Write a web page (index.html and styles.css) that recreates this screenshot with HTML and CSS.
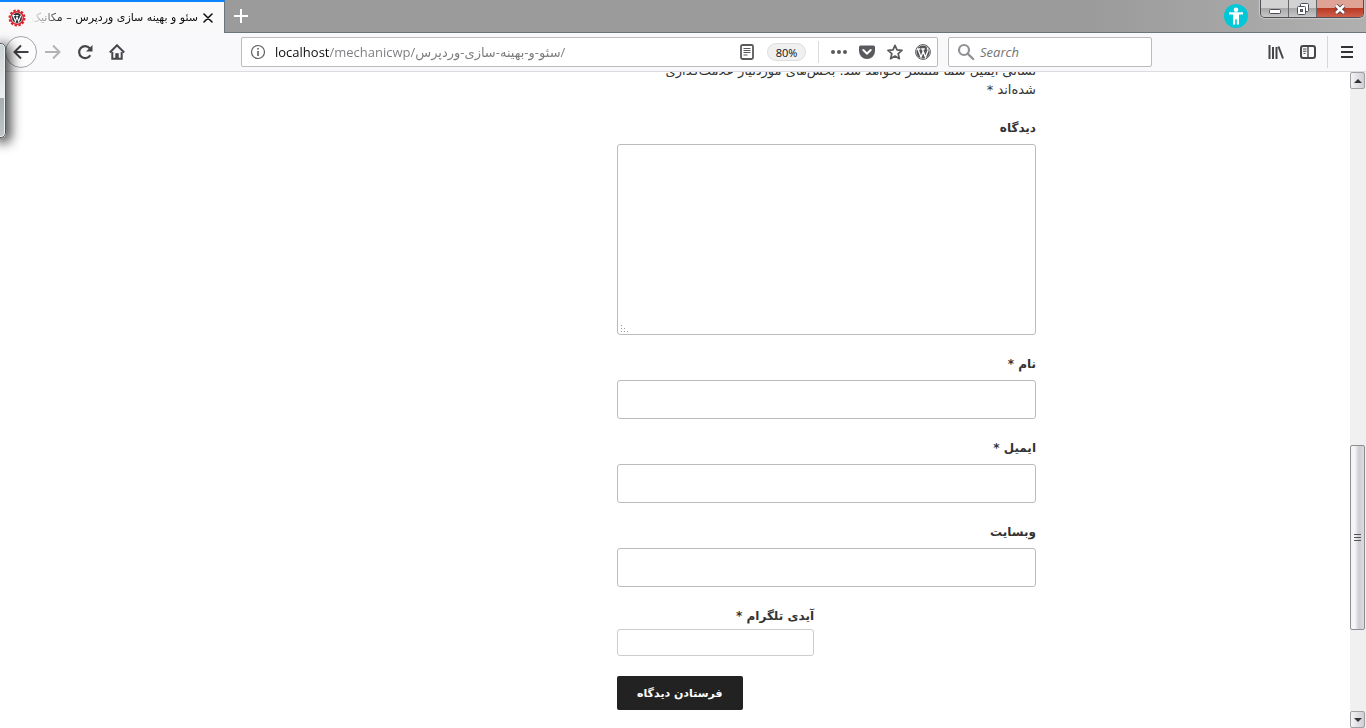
FILE: index.html
```html
<!DOCTYPE html>
<html lang="fa">
<head>
  <meta charset="UTF-8">
  <meta name="viewport" content="width=device-width, initial-scale=1.0">
  <title>سئو و بهینه سازی وردپرس – مکانیک</title>
  <link rel="stylesheet" href="styles.css">
</head>
<body>

  <header class="browser">
    <div class="tab-strip">
      <div class="tab">
        <svg class="favicon" width="18" height="18" viewBox="0 0 18 18">
          <circle cx="9" cy="9" r="7" fill="#d8202c"/>
          <circle cx="9" cy="9" r="7.5" fill="none" stroke="#d8202c" stroke-width="2" stroke-dasharray="2.4 1.53"/>
          <circle cx="9" cy="9" r="5.6" fill="#eef2f5"/>
          <circle cx="9" cy="9" r="4.9" fill="#26313c"/>
          <path d="M5.2 6.6l2.2 5.8L9 8l1.7 4.4 2-5.8M5 6.5h2.4M8 6.5h2.5" fill="none" stroke="#fff" stroke-width="1.1"/>
        </svg>
        <span class="tab-title">سئو و بهینه سازی وردپرس – مکانیک</span>
        <button class="tab-close" aria-label="Close tab">
          <svg width="10" height="10" viewBox="0 0 10 10"><path d="M1 1l8 8M9 1L1 9" stroke="#111" stroke-width="1.6" stroke-linecap="round"/></svg>
        </button>
      </div>
      <button class="new-tab" aria-label="New tab">
        <svg width="14" height="14" viewBox="0 0 14 14"><path d="M7 0v14M0 7h14" stroke="#fff" stroke-width="2"/></svg>
      </button>
      <button class="access" aria-label="Accessibility">
        <svg width="24" height="24" viewBox="0 0 24 24">
          <circle cx="12" cy="12" r="12" fill="#00c8d7"/>
          <circle cx="12" cy="5.8" r="2.3" fill="#fff"/>
          <path d="M5 8.2h14v2.2h-4v10h-2.2v-5.2h-1.6v5.2H9v-10H5z" fill="#fff"/>
        </svg>
      </button>
      <div class="window-buttons">
        <button class="win-btn" aria-label="Minimize">
          <svg width="14" height="14" viewBox="0 0 14 14"><rect x="1.5" y="7.5" width="11" height="4" rx="1" fill="#fff" stroke="#4c4f5c"/></svg>
        </button>
        <button class="win-btn" aria-label="Restore">
          <svg width="14" height="14" viewBox="0 0 14 14">
            <rect x="4.5" y="1.5" width="8" height="8" rx="1" fill="#fff" stroke="#4c4f5c"/>
            <rect x="1.5" y="4.5" width="8" height="8" rx="1" fill="#fff" stroke="#4c4f5c"/>
            <rect x="4.5" y="7.5" width="2" height="2" fill="#888" stroke="#4c4f5c"/>
          </svg>
        </button>
        <button class="win-btn win-close" aria-label="Close">
          <svg width="14" height="14" viewBox="0 0 14 14">
            <path d="M3 3.5l8 7.5M11 3.5L3 11" stroke="#4c3a45" stroke-width="4.4"/>
            <path d="M3 3.5l8 7.5M11 3.5L3 11" stroke="#fff" stroke-width="2.6"/>
          </svg>
        </button>
      </div>
    </div>

    <div class="toolbar">
      <button class="tool back" aria-label="Back">
        <svg width="16" height="16" viewBox="0 0 16 16"><path d="M15.5 8h-14M8 1.5L1.5 8 8 14.5" fill="none" stroke="#3f3f43" stroke-width="2"/></svg>
      </button>
      <button class="tool" aria-label="Forward">
        <svg width="16" height="16" viewBox="0 0 16 16"><path d="M0 8h14.5M8 1.5L14.5 8 8 14.5" fill="none" stroke="#b3b3b6" stroke-width="2"/></svg>
      </button>
      <button class="tool" aria-label="Reload">
        <svg width="16" height="16" viewBox="0 0 16 16"><path d="M13.3 11.2A6 6 0 1 1 12.7 4.2" fill="none" stroke="#46464a" stroke-width="2.2"/><path d="M15.5 1v6.5H9z" fill="#46464a"/></svg>
      </button>
      <button class="tool" aria-label="Home">
        <svg width="16" height="16" viewBox="0 0 16 16"><path d="M.8 8.5L8 1.3l7.2 7.2" fill="none" stroke="#46464a" stroke-width="2"/><path d="M3.3 8v6.8h9.4V8" fill="none" stroke="#46464a" stroke-width="2"/><path d="M6.3 15V9.2h3.4V15z" fill="#46464a"/></svg>
      </button>
      <div class="spacer"></div>

      <div class="urlbar">
        <svg class="info" width="16" height="16" viewBox="0 0 16 16"><circle cx="8" cy="8" r="6.5" fill="none" stroke="#606064" stroke-width="1.2"/><path d="M8 7v5M8 4v1.6" stroke="#606064" stroke-width="1.6"/></svg>
        <input class="url-input" type="text" dir="ltr" aria-label="Address" value="localhost/mechanicwp/سئو-و-بهینه-سازی-وردپرس/">
        <button class="page-action" aria-label="Reader view">
          <svg width="16" height="16" viewBox="0 0 16 16"><rect x="2" y="1" width="12" height="14" rx="1.5" fill="none" stroke="#5a5a5e" stroke-width="1.8"/><path d="M4.5 4.5h7M4.5 6.5h7M4.5 8.5h7M4.5 11h4" stroke="#5a5a5e"/></svg>
        </button>
        <button class="zoom-level">80%</button>
        <span class="url-separator"></span>
        <button class="page-action" aria-label="Page actions">
          <svg width="16" height="16" viewBox="0 0 16 16" fill="#5a5a5e"><circle cx="2" cy="8" r="2"/><circle cx="8" cy="8" r="2"/><circle cx="14" cy="8" r="2"/></svg>
        </button>
        <button class="page-action" aria-label="Save to Pocket">
          <svg width="16" height="16" viewBox="0 0 16 16"><path d="M1.6 1.5h12.8A1.6 1.6 0 0 1 16 3.1V7A8 8 0 0 1 0 7V3.1A1.6 1.6 0 0 1 1.6 1.5z" fill="#5a5a5e"/><path d="M4.3 6L8 9.6 11.7 6" fill="none" stroke="#fff" stroke-width="2" stroke-linecap="round"/></svg>
        </button>
        <button class="page-action" aria-label="Bookmark">
          <svg width="16" height="16" viewBox="0 0 16 16"><path d="M8 1.3l2 4.6 5 .5-3.8 3.3 1.2 5L8 12.1l-4.4 2.6 1.2-5L1 6.4l5-.5z" fill="none" stroke="#5a5a5e" stroke-width="1.7" stroke-linejoin="round"/></svg>
        </button>
        <button class="page-action" aria-label="WordPress">
          <svg width="16" height="16" viewBox="0 0 16 16"><circle cx="8" cy="8" r="7.4" fill="#fff" stroke="#5a5a5e" stroke-width="1"/><circle cx="8" cy="8" r="6.6" fill="#56565a"/><path d="M3 5l3 8.2L8.3 7M7.4 5l3 8.2L13 6.4c.3-1.1-.7-1.7-.9-2.9M2 5h3.3M6.3 5h3.5" fill="none" stroke="#fff" stroke-width="1.3"/></svg>
        </button>
      </div>

      <div class="searchbar">
        <svg width="18" height="18" viewBox="0 0 18 18"><circle cx="7" cy="7" r="5" fill="none" stroke="#929296" stroke-width="2.2"/><path d="M10.6 10.6l5.6 5.4" stroke="#929296" stroke-width="2.4" stroke-linecap="round"/></svg>
        <input class="search-input" type="text" dir="ltr" aria-label="Search" placeholder="Search">
      </div>
      <div class="spacer"></div>

      <button class="tool" aria-label="Library">
        <svg width="16" height="16" viewBox="0 0 16 16"><path d="M1.5 1v14M5 3v12M8.500 3v12M10.5 2.5L15 14.5" stroke="#46464a" stroke-width="2"/></svg>
      </button>
      <button class="tool" aria-label="Sidebars">
        <svg width="16" height="16" viewBox="0 0 16 16"><rect x="1" y="2" width="14" height="12" rx="2.2" fill="none" stroke="#46464a" stroke-width="2"/><path d="M8 2v12" stroke="#46464a" stroke-width="1.4"/><path d="M3 5h3.5M3 7.2h3.5M3.5 9.4h2" stroke="#46464a"/></svg>
      </button>
      <span class="toolbar-separator"></span>
      <button class="tool" aria-label="Menu">
        <svg width="12" height="12" viewBox="0 0 12 12"><path d="M0 1h12M0 6h12M0 11h12" stroke="#333337" stroke-width="2"/></svg>
      </button>
    </div>
  </header>

  <div class="viewport">
    <main class="page" dir="rtl">
      <form class="comment-form">
        <p class="comment-notes">نشانی ایمیل شما منتشر نخواهد شد. بخش‌های موردنیاز علامت‌گذاری شده‌اند&nbsp;*</p>
        <div class="field">
          <label for="comment">دیدگاه</label>
          <div class="textarea-box">
            <textarea id="comment"></textarea>
            <svg class="grip" width="9" height="9" viewBox="0 0 9 9" fill="#999"><path d="M1 0h1v1H1zM1 3h1v1H1zM4 3h1v1H4zM1 6h1v1H1zM4 6h1v1H4zM7 6h1v1H7z"/></svg>
          </div>
        </div>
        <div class="field">
          <label for="author">نام *</label>
          <input id="author" type="text">
        </div>
        <div class="field">
          <label for="email">ایمیل *</label>
          <input id="email" type="email">
        </div>
        <div class="field">
          <label for="url">وبسایت</label>
          <input id="url" type="url">
        </div>
        <div class="field field-small">
          <label for="telegram">آیدی تلگرام *</label>
          <input id="telegram" type="text">
        </div>
        <button class="submit" type="button">فرستادن دیدگاه</button>
      </form>
    </main>

    <div class="scrollbar">
      <button class="scroll-arrow" aria-label="Scroll up"><svg width="8" height="4" viewBox="0 0 8 4"><path d="M0 4l4-4 4 4z" fill="#333"/></svg></button>
      <div class="scroll-track">
        <div class="scroll-before"></div>
        <div class="scroll-thumb"><svg width="7" height="9" viewBox="0 0 7 9"><path d="M0 1.5h7M0 4.5h7M0 7.5h7" stroke="#555"/></svg></div>
        <div class="scroll-after"></div>
      </div>
      <button class="scroll-arrow" aria-label="Scroll down"><svg width="8" height="4" viewBox="0 0 8 4"><path d="M0 0l4 4 4-4z" fill="#333"/></svg></button>
    </div>
  </div>

  <div class="side-panel"></div>

</body>
</html>
```

FILE: styles.css
```css
* {
  box-sizing: border-box;
}

body {
  margin: 0;
  height: 100vh;
  display: flex;
  flex-direction: column;
  overflow: hidden;
  background: #fff;
  font-family: "DejaVu Sans", sans-serif;
}

button {
  margin: 0;
  padding: 0;
  border: none;
  background: none;
  display: flex;
  align-items: center;
  justify-content: center;
  flex: none;
}

svg {
  flex: none;
}

/* Tab strip */
.tab-strip {
  display: flex;
  height: 33px;
  background: linear-gradient(90deg, #9b9b9b 80%, #b0b0b0);
  border-bottom: 1px solid #6b7478;
}

.tab {
  display: flex;
  align-items: center;
  gap: 5px;
  width: 225px;
  height: 33px;
  padding: 0 11px 0 8px;
  background: #f9f9fa;
  border-top: 2px solid #0a84ff;
  border-right: 1px solid #6b7478;
}

.tab-title {
  flex: 1;
  direction: rtl;
  overflow: hidden;
  white-space: nowrap;
  font-size: 11px;
  color: #0c0c0d;
  -webkit-mask-image: linear-gradient(90deg, transparent, #000 32px);
  mask-image: linear-gradient(90deg, transparent, #000 32px);
}

.tab-close {
  width: 10px;
}

.new-tab {
  width: 32px;
}

.access {
  margin-left: auto;
}

.window-buttons {
  display: flex;
  align-self: flex-start;
  height: 18px;
  margin-left: 12px;
  margin-right: 2px;
  border: 1px solid #4f4f55;
  border-top: none;
  border-radius: 0 0 5px 5px;
  overflow: hidden;
  box-shadow: 0 0 1px 1px #c8c8c8;
}

.win-btn {
  width: 28px;
  background: linear-gradient(#d2d2d2 50%, #a8a8a8 50%, #c8c8c8);
  border-right: 1px solid #66666b;
}

.win-close {
  width: 46px;
  background: linear-gradient(#dfa396 45%, #b93a25 50%, #d0604a);
  border-right: none;
}

/* Toolbar */
.toolbar {
  display: flex;
  align-items: center;
  height: 39px;
  padding: 0 3px 0 5px;
  background: #f9f9fb;
  border-bottom: 1px solid #dcdce0;
}

.tool {
  width: 32px;
  height: 32px;
}

.back {
  background: #fcfcfd;
  border: 1px solid #a6a6aa;
  border-radius: 50%;
}

.spacer {
  width: 108px;
}

.urlbar,
.searchbar {
  display: flex;
  align-items: center;
  height: 30px;
  background: #fff;
  border: 1px solid #bcbcbf;
  border-radius: 2px;
}

.urlbar {
  flex: 1;
  min-width: 0;
  padding-left: 8px;
}

.url-input,
.search-input {
  flex: 1;
  min-width: 0;
  height: 28px;
  padding: 0;
  border: none;
  outline: none;
  background: none;
  font-family: "Open Sans", "DejaVu Sans", sans-serif;
  font-size: 13px;
}

/* the host is darker than the path */
.url-input {
  margin-left: 9px;
  background: linear-gradient(90deg, #0c0c0d 54px, #7b7b7f 54px);
  -webkit-background-clip: text;
  background-clip: text;
  color: transparent;
}

.page-action {
  width: 28px;
  height: 28px;
}

.zoom-level {
  width: 39px;
  height: 18px;
  margin: 0 12px 0 6px;
  background: #f0f0f1;
  border: 1px solid #dededf;
  border-radius: 9px;
  font-family: "Open Sans", sans-serif;
  font-size: 11px;
  color: #0c0c0d;
}

.url-separator {
  width: 1px;
  height: 22px;
  margin-right: 6px;
  background: #dcdcde;
}

.searchbar {
  width: 204px;
  margin-left: 10px;
  padding-left: 8px;
}

.search-input {
  margin-left: 5px;
}

.search-input::placeholder {
  color: #737377;
  font-style: italic;
}

.toolbar-separator {
  width: 1px;
  height: 32px;
  margin: 0 3px;
  background: #d7d7da;
}

/* Page */
.viewport {
  flex: 1;
  min-height: 0;
  display: flex;
}

.page {
  flex: 1;
  display: grid;
  grid-template-columns: 314fr 419fr 617fr;
  align-content: end;
  overflow: hidden;
  padding-bottom: 18px;
  color: #333;
  font-size: 12px;
  line-height: 19px;
}

.comment-form {
  grid-column: 2;
  display: flex;
  flex-direction: column;
  gap: 20px;
}

.comment-notes {
  margin: 0;
  font-size: 13px;
}

.field {
  display: flex;
  flex-direction: column;
  gap: 6px;
}

.field label {
  font-weight: bold;
}

.field input,
.field textarea {
  width: 100%;
  height: 39px;
  padding: 8px 11px;
  border: 1px solid #bbb;
  border-radius: 3px;
  background: #fff;
  color: #666;
  font: inherit;
}

.textarea-box {
  position: relative;
  display: flex;
}

.field textarea {
  height: 191px;
  resize: none;
}

.grip {
  position: absolute;
  left: 3px;
  bottom: 1px;
}

.field-small {
  align-self: flex-end;
  width: 197px;
  gap: 3px;
}

.field-small input {
  height: 27px;
  padding: 2px 6px;
  border-color: #ccc;
}

.submit {
  align-self: flex-end;
  height: 34px;
  padding: 0 20px;
  background: #222;
  border-radius: 2px;
  color: #fff;
  font-family: inherit;
  font-size: 11px;
  font-weight: bold;
}

/* Scrollbar */
.scrollbar {
  display: flex;
  flex-direction: column;
  width: 16px;
  background: #f0f0f0;
}

.scroll-arrow {
  height: 17px;
  margin-right: 1px;
  background: linear-gradient(90deg, #f4f4f5, #cfcfd4);
  border: 1px solid #a0a0a4;
  border-radius: 2px;
}

.scroll-track {
  flex: 1;
  display: flex;
  flex-direction: column;
}

.scroll-before {
  flex: 357;
}

.scroll-thumb {
  flex: 184;
  display: flex;
  align-items: center;
  justify-content: center;
  margin-right: 1px;
  background: linear-gradient(90deg, #f5f5f6 30%, #cdcdd3 60%, #dcdce0);
  border: 1px solid #8e8e92;
  border-radius: 2px;
}

.scroll-after {
  flex: 81;
}

/* Docked panel peeking in from the left edge */
.side-panel {
  position: absolute;
  left: -6px;
  top: 43px;
  width: 12px;
  height: 95px;
  border: 1px solid #55585a;
  border-radius: 5px;
  background: linear-gradient(#cfd2d4, #eceeef 58%, #a9adaf 58%, #c3c6c8);
  box-shadow: inset 0 0 0 1px #e6f4f4, 3px 3px 12px 2px rgba(0, 0, 0, 0.7);
}
```
